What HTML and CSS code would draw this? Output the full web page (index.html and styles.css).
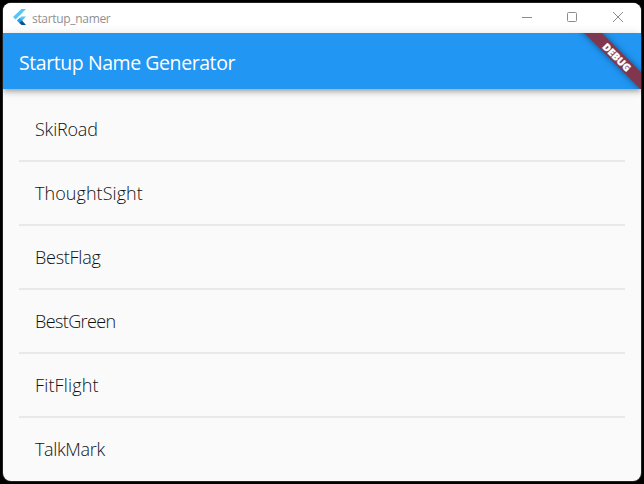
FILE: index.html
```html
<!DOCTYPE html>
<html lang="en">
<head>
<meta charset="utf-8">
<title>startup_namer</title>
<link rel="stylesheet" href="styles.css">
</head>
<body>
<div class="window">
  <header class="titlebar">
    <svg class="logo" width="14" height="17" viewBox="0 0 14 17"><path fill="#54c5f8" d="M8.5 0H13L2.6 10.4L0 8Z"/><path fill="#54c5f8" d="M8.5 7.5H13L9.2 11.7L6.7 14.2L4 11.6Z"/><path fill="#29a0e8" d="M4 11.6L6.7 9.1L9.3 11.6L6.7 14.2Z"/><path fill="#01579b" d="M6.4 14L9 11.6L13 16H8.5Z"/></svg>
    <span class="caption">startup_namer</span>
    <div class="controls">
      <svg width="12" height="12" viewBox="0 0 12 12"><path d="M1 6.5H11"/></svg>
      <svg width="12" height="12" viewBox="0 0 12 12"><rect x="1.5" y="1.5" width="9" height="9" rx="1"/></svg>
      <svg width="12" height="12" viewBox="0 0 12 12"><path d="M1 1L11 11M11 1L1 11"/></svg>
    </div>
  </header>
  <div class="appbar"><h1>Startup Name Generator</h1></div>
  <main class="list">
    <div class="tile road">SkiRoad</div><hr>
    <div class="tile sight">ThoughtSight</div><hr>
    <div class="tile flag">BestFlag</div><hr>
    <div class="tile green">BestGreen</div><hr>
    <div class="tile flight">FitFlight</div><hr>
    <div class="tile mark">TalkMark</div>
  </main>
  <div class="debug"><div class="banner">DEBUG</div></div>
</div>
</body>
</html>
```
FILE: styles.css
```css
* { box-sizing: border-box; }
html, body { margin: 0; height: 100%; background: #000; overflow: hidden; }
body { padding: 3px; font-family: "Open Sans", "Noto Sans", sans-serif; }
.window {
  position: relative;
  display: flex;
  flex-direction: column;
  width: 638px;
  height: 478px;
  overflow: hidden;
  border-radius: 8px;
  background: #fafafa;
  box-shadow: 0 0 0 1px #222;
}
.titlebar {
  display: flex;
  align-items: center;
  flex: 0 0 30px;
  padding: 0 17px 2px 10px;
  background: #fff;
}
.logo { flex: none; margin-top: 1px; }
.caption { margin: 2px 0 0 5px; font-size: 12px; letter-spacing: -0.5px; color: #909090; }
.controls { display: flex; gap: 34px; margin-left: auto; }
.controls svg { display: block; fill: none; stroke: #8c8c8c; stroke-width: 1; }
.controls svg:first-child { margin-right: -1px; }
.appbar {
  display: flex;
  align-items: center;
  flex: 0 0 56px;
  padding: 0 16px 0;
  z-index: 1;
  background: #2196f3;
  box-shadow: 0 2px 4px -1px rgba(0,0,0,.2), 0 4px 5px rgba(0,0,0,.14), 0 1px 10px rgba(0,0,0,.12);
}
h1 { margin: 4px 0 0; font-size: 19.5px; font-weight: 400; letter-spacing: -0.43px; line-height: 28px; color: #fff; }
.list { padding: 16px; }
.tile {
  display: flex;
  align-items: center;
  height: 48px;
  padding: 0 16px 1px;
  font-size: 18px;
  font-weight: 350;
  color: #111;
}
.road { letter-spacing: -0.2px; }
.sight { letter-spacing: 0.06px; }
.flag { letter-spacing: -0.25px; }
.green { letter-spacing: -0.6px; }
.flight { letter-spacing: 0.15px; }
.mark { letter-spacing: -0.35px; }
hr { height: 2px; margin: 7px 0; border: 0; background: #e9e9e9; }
.debug {
  position: absolute;
  z-index: 2;
  top: 30px;
  right: 0;
  width: 80px;
  height: 56px;
  overflow: hidden;
}
.banner {
  position: absolute;
  left: 6px;
  top: 17.5px;
  width: 100px;
  height: 12px;
  transform: rotate(45deg);
  background: #80364d;
  box-shadow: 0 0 6px rgba(0,0,0,.5);
  text-align: center;
  font-size: 10.2px;
  font-weight: 800;
  line-height: 12px;
  color: #fff;
  -webkit-text-stroke: 0.3px #fff;
}
.caption { letter-spacing: -0.32px; }
```
